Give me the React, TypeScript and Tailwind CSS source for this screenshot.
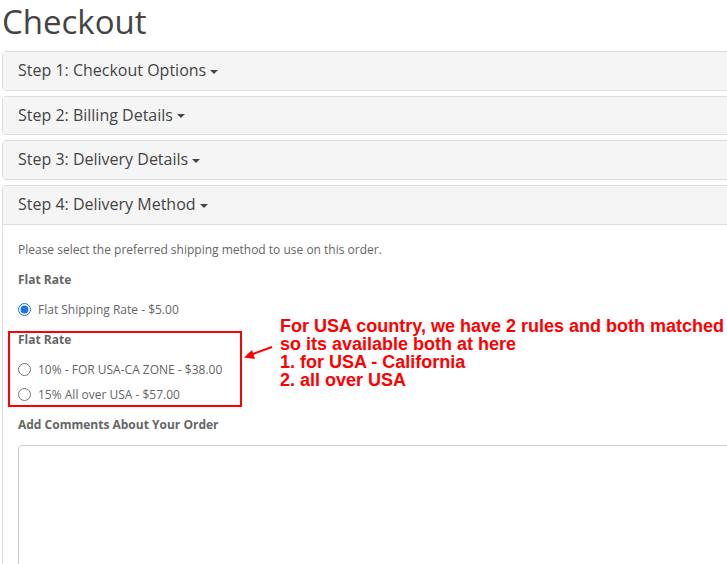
import React from "react";

const Caret = () => (
  <span className="ml-[4px] inline-block h-0 w-0 border-x-[4px] border-t-[4px] border-x-transparent border-t-[#444] align-middle" />
);

const Heading = ({ text }: { text: string }) => (
  <div className="h-[37.7px] bg-[#f5f5f5] px-[15px] pt-[9px] text-[16px] leading-[18px] text-[#444]">
    {text}
    <Caret />
  </div>
);

const Radio = ({ label, checked }: { label: string; checked?: boolean }) => (
  <label className="flex h-[20px] items-center text-[12px] text-[#666]">
    <input
      type="radio"
      name="ship"
      defaultChecked={checked}
      className="m-0 mr-[7px] h-[13px] w-[13px] accent-[#1a73e8]"
    />
    {label}
  </label>
);

export default function App() {
  return (
    <div
      className="relative h-[564px] w-[727px] overflow-hidden bg-white"
      style={{ fontFamily: '"Open Sans", sans-serif' }}
    >
      <h1 className="ml-[2px] mb-[11px] pt-[4px] text-[33px] font-normal leading-[36px] text-[#444]">
        Checkout
      </h1>
      <div className="ml-[2px] flex w-[780px] flex-col gap-[5px]">
        {["Step 1: Checkout Options", "Step 2: Billing Details", "Step 3: Delivery Details"].map((t) => (
          <div key={t} className="rounded-[4px] border border-[#ddd]">
            <Heading text={t} />
          </div>
        ))}
        <div className="rounded-[4px] border border-[#ddd]">
          <div className="border-b border-[#ddd]">
            <Heading text="Step 4: Delivery Method" />
          </div>
          <div className="p-[15px] text-[12px] leading-[20px] text-[#666]">
            <p className="mb-[10px]">Please select the preferred shipping method to use on this order.</p>
            <p className="mb-[10px] font-bold">Flat Rate</p>
            <div className="my-[10px]">
              <Radio label="Flat Shipping Rate - $5.00" checked />
            </div>
            <p className="mb-[10px] font-bold">Flat Rate</p>
            <div className="mt-[10px]">
              <Radio label="10% - FOR USA-CA ZONE - $38.00" />
            </div>
            <div className="mt-[5px] mb-[10px]">
              <Radio label="15% All over USA - $57.00" />
            </div>
            <p className="mb-[10px] font-bold">Add Comments About Your Order</p>
            <div className="h-[200px] rounded-[4px] border border-[#ccc]" />
          </div>
        </div>
      </div>

      {/* annotation */}
      <div className="absolute left-[8px] top-[331px] h-[76px] w-[234px] border-2 border-[#ff0000]" />
      <svg className="absolute left-[240px] top-[340px]" width="40" height="24" viewBox="0 0 40 24">
        <line x1="32" y1="7" x2="10" y2="15" stroke="#ff0000" strokeWidth="2" />
        <polygon points="4,17.5 12,10 15,19" fill="#ff0000" />
      </svg>
      <div
        className="absolute left-[280px] top-[317px] text-[18px] font-bold leading-[18px] text-[#ff0000]"
        style={{ fontFamily: '"Liberation Sans", Arial, sans-serif' }}
      >
        <div>For USA country, we have 2 rules and both matched</div>
        <div>so its available both at here</div>
        <div>1. for USA - California</div>
        <div>2. all over USA</div>
      </div>
    </div>
  );
}
